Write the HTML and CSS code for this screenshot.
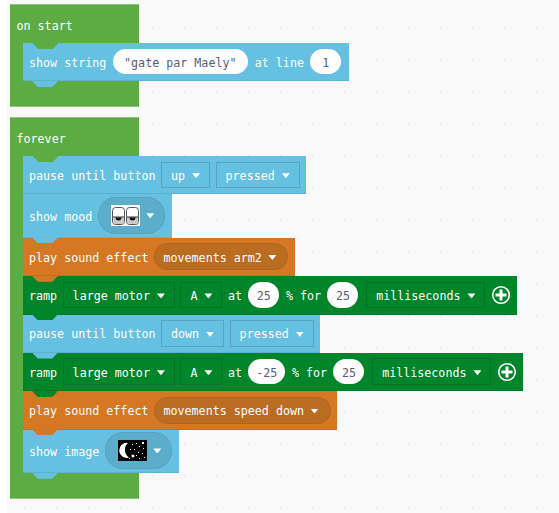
FILE: index.html
```html
<!DOCTYPE html>
<html lang="en">
<head>
<meta charset="utf-8">
<title>Blocks</title>
<link rel="stylesheet" href="styles.css">
</head>
<body>
<main class="canvas">
  <section class="hat">
    <div class="hat-title">on start</div>
    <div class="stack">
      <div class="block blue">
        <span class="label">show string</span>
        <span class="input">"gate par Maely"</span>
        <span class="label">at line</span>
        <span class="input num">1</span>
      </div>
    </div>
  </section>
  <section class="hat">
    <div class="hat-title">forever</div>
    <div class="stack">
      <div class="block blue">
        <span class="label">pause until button</span>
        <span class="field">up<i class="arrow"></i></span>
        <span class="field">pressed<i class="arrow"></i></span>
      </div>
      <div class="block blue tall">
        <span class="label">show mood</span>
        <span class="pill picture">
          <svg class="pic" viewBox="0 0 29 21" width="29" height="21" aria-hidden="true">
            <rect width="29" height="21" fill="#fff"/>
            <rect x="1.500" y="2.500" width="12" height="17" rx="3" fill="#fff" stroke="#555"/>
            <rect x="15.500" y="2.500" width="12" height="17" rx="3" fill="#fff" stroke="#555"/>
            <rect x="2" y="12" width="11" height="7" rx="2" fill="#c9c9c9"/>
            <rect x="16" y="12" width="11" height="7" rx="2" fill="#c9c9c9"/>
            <path d="M2 12h11M16 12h11" stroke="#333" stroke-width="1"/>
            <path d="M4.500 12.500h6a3 3 0 0 1-6 0zM18.500 12.500h6a3 3 0 0 1-6 0z" fill="#111"/>
          </svg>
          <i class="arrow"></i>
        </span>
      </div>
      <div class="block orange">
        <span class="label">play sound effect</span>
        <span class="pill sound">movements arm2<i class="arrow"></i></span>
      </div>
      <div class="block green">
        <span class="label">ramp</span>
        <span class="field">large motor<i class="arrow"></i></span>
        <span class="field">A<i class="arrow"></i></span>
        <span class="label">at</span>
        <span class="input num">25</span>
        <span class="label">% for</span>
        <span class="input num">25</span>
        <span class="field">milliseconds<i class="arrow"></i></span>
        <svg class="plus" viewBox="0 0 20 20" width="20" height="20" aria-hidden="true">
          <circle cx="10" cy="10" r="8.300" fill="none" stroke="#fff" stroke-width="1.600"/>
          <path d="M10 4.500v11M4.500 10h11" stroke="#fff" stroke-width="3"/>
        </svg>
      </div>
      <div class="block blue">
        <span class="label">pause until button</span>
        <span class="field">down<i class="arrow"></i></span>
        <span class="field">pressed<i class="arrow"></i></span>
      </div>
      <div class="block green">
        <span class="label">ramp</span>
        <span class="field">large motor<i class="arrow"></i></span>
        <span class="field">A<i class="arrow"></i></span>
        <span class="label">at</span>
        <span class="input num neg">-25</span>
        <span class="label">% for</span>
        <span class="input num">25</span>
        <span class="field">milliseconds<i class="arrow"></i></span>
        <svg class="plus" viewBox="0 0 20 20" width="20" height="20" aria-hidden="true">
          <circle cx="10" cy="10" r="8.300" fill="none" stroke="#fff" stroke-width="1.600"/>
          <path d="M10 4.500v11M4.500 10h11" stroke="#fff" stroke-width="3"/>
        </svg>
      </div>
      <div class="block orange">
        <span class="label">play sound effect</span>
        <span class="pill sound">movements speed down<i class="arrow"></i></span>
      </div>
      <div class="block blue tall">
        <span class="label">show image</span>
        <span class="pill picture">
          <svg class="pic" viewBox="0 0 29 21" width="29" height="21" aria-hidden="true">
            <rect width="29" height="21" fill="#000"/>
            <path d="M10 3a7.500 7.500 0 1 0 1 14.500a8.500 8.500 0 0 1-4-7.500a8.500 8.500 0 0 1 3-7z" fill="#fff"/>
            <g fill="#fff">
              <circle cx="15" cy="16" r="1.500"/>
              <rect x="14" y="4" width="1" height="1"/><rect x="18" y="3" width="1" height="1"/>
              <rect x="24" y="2" width="2" height="2"/><rect x="21" y="6" width="1" height="1"/>
              <rect x="16" y="9" width="1" height="1"/><rect x="25" y="8" width="1" height="1"/>
              <rect x="20" y="12" width="1" height="1"/><rect x="24" y="13" width="1" height="1"/>
              <rect x="12" y="9" width="1" height="1"/><rect x="21" y="18" width="1" height="1"/>
              <rect x="26" y="17" width="1" height="1"/><rect x="18" y="15" width="1" height="1"/>
              <rect x="11" y="18" width="1" height="1"/>
            </g>
          </svg>
          <i class="arrow"></i>
        </span>
      </div>
    </div>
  </section>
</main>
</body>
</html>
```

FILE: styles.css
```css
* { box-sizing: border-box; }

html, body {
  margin: 0;
  height: 100%;
  background: #fff;
  overflow: hidden;
}

.canvas {
  margin-left: 7px;
  height: 513px;
  padding: 4.3px 0 0 2.5px;
  display: flex;
  flex-direction: column;
  gap: 10px;
  background-color: #f9f9f9;
  background-image: radial-gradient(circle at 0.5px 0.5px, #d4d4d4 0.7px, transparent 0.8px);
  background-size: 32px 32px;
  background-position: 17px 27px;
  font-family: "DejaVu Sans Mono", "Liberation Mono", monospace;
  font-size: 11.68px;
  color: #fff;
}

.hat {
  position: relative;
  width: 129px;
  padding: 0 0 25px 13px;
  background: #5cac43;
  border-top: 1px solid #8fc47f;
  border-bottom: 1px solid #8fc47f;
}

.hat-title {
  position: relative;
  height: 37.7px;
  margin-left: -6px;
  padding-top: 14px;
  line-height: 14px;
}

.hat-title::after {
  content: "";
  position: absolute;
  z-index: 1;
  left: 16px;
  bottom: -6px;
  width: 26px;
  height: 6px;
  background: #5cac43;
  clip-path: polygon(0 0, 100% 0, 78% 100%, 22% 100%);
}

.stack {
  display: flex;
  flex-direction: column;
  align-items: flex-start;
}

.block {
  position: relative;
  display: flex;
  align-items: center;
  gap: 5.5px;
  height: 38.4px;
  padding: 0 6.500px;
  white-space: nowrap;
  border-bottom: 1px solid rgba(0, 0, 0, 0.08);
}

.block::after {
  content: "";
  position: absolute;
  z-index: 1;
  left: 9.500px;
  bottom: -6.500px;
  width: 26px;
  height: 6px;
  background: inherit;
  clip-path: polygon(0 0, 100% 0, 78% 100%, 22% 100%);
}

.tall { height: 43.4px; }
.blue { background: #66c0e1; }
.orange { background: #d67823; }
.green { background: #00852b; }

.label { padding-top: 2px; }

.field {
  display: flex;
  align-items: center;
  gap: 7px;
  height: 26.5px;
  padding: 2px 9px 0;
  border: 1px solid rgba(0, 0, 0, 0.14);
}

.input + .field { margin-left: 1px; }

.arrow {
  display: block;
  width: 8px;
  height: 5px;
  background: #fff;
  clip-path: polygon(0 0, 100% 0, 50% 100%);
}

.input {
  display: flex;
  align-items: center;
  justify-content: center;
  height: 25.500px;
  margin: 0 1.250px 0 0.75px;
  padding: 2px 11.500px 0;
  background: #fff;
  color: #575e75;
  border-radius: 13px;
}

.num { width: 31px; padding: 2px 0 0; }
.neg { width: 37px; }

.pill {
  display: flex;
  align-items: center;
  margin-left: 0.500px;
  border-radius: 18px;
}

.sound {
  gap: 6.500px;
  height: 27px;
  padding: 2px 11px 0 8px;
  background: #ba6c20;
  border: 1px solid rgba(0, 0, 0, 0.05);
}

.picture {
  gap: 6px;
  height: 37px;
  padding: 0 10px 0 12px;
  background: #5cadcb;
  border: 1px solid rgba(0, 0, 0, 0.06);
}

.pic { display: block; }
.plus { display: block; flex: none; }
```
